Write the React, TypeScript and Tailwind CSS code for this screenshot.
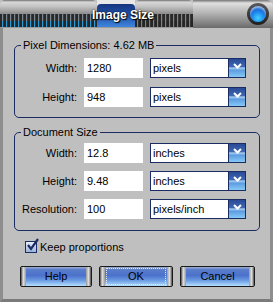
import React from "react";

const units = {
	pixels: "pixels",
	inches: "inches",
	ppi: "pixels/inch",
};

function DropButton() {
	return (
		<div className="flex h-full w-[17px] items-start justify-center border-l border-[#1b2c63] bg-[linear-gradient(to_bottom,#2a4b96_0%,#3d66b4_42%,#a9cdef_50%,#5d9ce0_62%,#86c8f6_100%)] pt-[4px]">
			<svg width="9" height="6" viewBox="0 0 9 6">
				<path d="M1 1 L4.5 4.5 L8 1" fill="none" stroke="#ffffff" strokeWidth="2" />
			</svg>
		</div>
	);
}

function Row({
	label,
	value,
	unit,
}: {
	label: string;
	value: string;
	unit: string;
}) {
	return (
		<div className="flex h-[20px] items-center">
			<span className="w-[62px] text-right text-[11px] leading-none">{label}</span>
			<div className="ml-[7px] flex h-full w-[59px] items-center bg-white pl-[3px] text-[11px]">
				{value}
			</div>
			<div className="ml-[7px] flex h-full w-[96px] border border-[#1b2c63] bg-white">
				<span className="flex flex-1 items-center pl-[2px] text-[11px]">{unit}</span>
				<DropButton />
			</div>
		</div>
	);
}

function MetalButton({
	label,
	width,
	focused,
}: {
	label: string;
	width: string;
	focused?: boolean;
}) {
	return (
		<div
			className={`flex h-[21px] ${width} overflow-hidden rounded-[2px] border border-[#1a1a1a]`}
		>
			<div className="w-[5px] bg-[linear-gradient(to_right,#4a4a4a,#e2e2e2_45%,#9a9a9a)]" />
			<div className="relative flex flex-1 items-center justify-center bg-[linear-gradient(to_bottom,#9eaed0_0%,#5a7cca_14%,#4b72cc_45%,#6a9ae2_70%,#b4e0ff_100%)] text-[11px] text-black">
				{label}
				{focused && (
					<div className="absolute inset-x-[1px] inset-y-[1px] border border-dotted border-[#e8e8e8]" />
				)}
			</div>
			<div className="w-[5px] bg-[linear-gradient(to_right,#9a9a9a,#e2e2e2_55%,#4a4a4a)]" />
		</div>
	);
}

function Stripes({ className }: { className: string }) {
	return (
		<div className={`flex flex-col ${className}`}>
			<div className="h-[14px] rounded-t-[5px] bg-[linear-gradient(to_bottom,#6e6e6e_0px,#d8d8d8_2px,#c6c6c6_6px,#8c8c8c_14px)]" />
			<div className="h-[7px] bg-[repeating-linear-gradient(90deg,#2a2a2a_0px,#2a2a2a_2px,#7c8790_2px,#7c8790_3px,#3c3c3c_3px,#3c3c3c_4px)]" />
			<div className="h-[6px] bg-[repeating-linear-gradient(90deg,#262626_0px,#262626_2px,#2f9ad6_2px,#2f9ad6_3px,#343434_3px,#343434_4px)]" />
			<div className="h-[1px] bg-[#9a9a9a]" />
		</div>
	);
}

export default function App() {
	return (
		<div className="flex h-[302px] w-[273px] flex-col bg-[#c0bfbf] font-['Liberation_Sans',Arial,sans-serif] text-black">
			{/* title bar */}
			<div className="relative flex h-[28px] bg-[#c0bfbf]">
				<Stripes className="w-[97px]" />
				<div className="flex w-[38px] flex-col bg-[#e8e8e8]">
					<div className="mt-[4px] flex-1 rounded-t-[4px] bg-[linear-gradient(to_bottom,#16357c_0%,#2358b4_55%,#3f86dc_100%)]" />
					<div className="h-[1px] bg-[#9a9a9a]" />
				</div>
				<Stripes className="w-[58px]" />
				<div className="flex flex-1 items-center justify-end rounded-tr-[6px] bg-[linear-gradient(to_bottom,#747474_0px,#e0e0e0_3px,#b4b4b4_13px,#6a6a6a_28px)] pr-[4px]">
					<div className="flex h-[22px] w-[22px] items-center justify-center rounded-full bg-[linear-gradient(to_bottom,#5a5a5a,#1e1e1e)]">
						<div className="h-[16px] w-[16px] rounded-full bg-[radial-gradient(circle_at_50%_75%,#3fd0ff_0%,#1a7ae8_50%,#0a3a9a_100%)] shadow-[inset_0_2px_2px_rgba(255,255,255,0.6)]" />
					</div>
				</div>
				<span className="absolute left-[92px] top-[8px] text-[12px] font-bold leading-[14px] text-white [text-shadow:0_0_2px_#000,1px_1px_1px_#000]">
					Image Size
				</span>
			</div>

			{/* body */}
			<div className="flex flex-1 flex-col border-x-[3px] border-b-[3px] border-x-[#8e8e8e] border-b-[#7a7a7a]">
				<fieldset className="ml-[11px] mt-[10px] w-[246px] rounded-[5px] border border-[#1b2c63] pb-[10px] pt-[6px]">
					<legend className="ml-[6px] px-[2px] text-[11px] leading-[14px]">
						Pixel Dimensions: 4.62 MB
					</legend>
					<div className="flex flex-col gap-[9px]">
						<Row label="Width:" value="1280" unit={units.pixels} />
						<Row label="Height:" value="948" unit={units.pixels} />
					</div>
				</fieldset>

				<fieldset className="ml-[11px] mt-[7px] w-[246px] rounded-[5px] border border-[#1b2c63] pb-[11px] pt-[4px]">
					<legend className="ml-[6px] px-[2px] text-[11px] leading-[14px]">
						Document Size
					</legend>
					<div className="flex flex-col gap-[8px]">
						<Row label="Width:" value="12.8" unit={units.inches} />
						<Row label="Height:" value="9.48" unit={units.inches} />
						<Row label="Resolution:" value="100" unit={units.ppi} />
					</div>
				</fieldset>

				<div className="ml-[22px] mt-[10px] flex h-[12px] items-center gap-[3px]">
					<div className="relative h-[12px] w-[12px] border border-[#1b2c63] bg-[linear-gradient(to_bottom,#e8eef8,#9ab4dc)]">
						<svg
							className="absolute -top-[4px] left-[0px]"
							width="14"
							height="14"
							viewBox="0 0 14 14"
						>
							<path d="M2 7 L5 11 L12 1" fill="none" stroke="#1b2c63" strokeWidth="2.2" />
						</svg>
					</div>
					<span className="text-[11px] leading-none">Keep proportions</span>
				</div>

				<div className="ml-[17px] mt-[13px] flex gap-[7px]">
					<MetalButton label="Help" width="w-[72px]" />
					<MetalButton label="OK" width="w-[74px]" focused />
					<MetalButton label="Cancel" width="w-[75px]" />
				</div>
			</div>
		</div>
	);
}
